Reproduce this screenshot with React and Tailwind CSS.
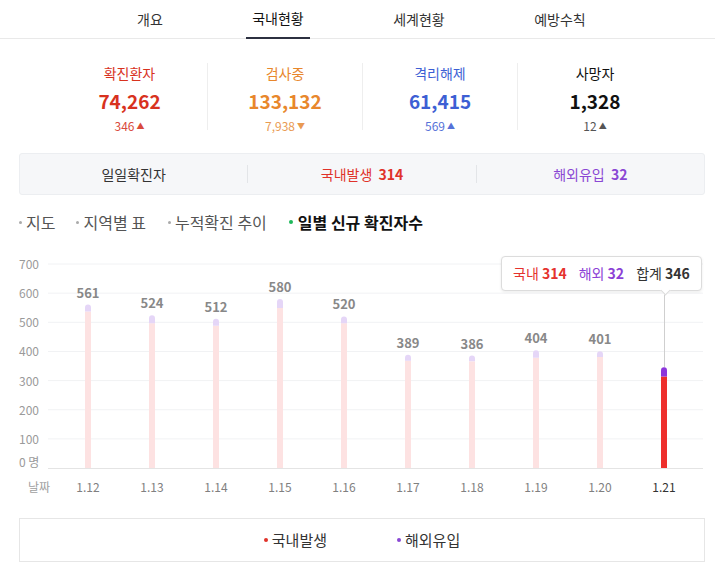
import React from "react";

const FONT = { fontFamily: '"Noto Sans CJK KR", "Noto Sans", sans-serif' };

const TABS = [
  { label: "개요", w: "w-[38px]" },
  { label: "국내현황", w: "w-[64px]", active: true },
  { label: "세계현황", w: "w-[64px]" },
  { label: "예방수칙", w: "w-[64px]" },
];

const DAYS = [
  { d: "1.12", dom: 537, ovs: 24 },
  { d: "1.13", dom: 497, ovs: 27 },
  { d: "1.14", dom: 488, ovs: 24 },
  { d: "1.15", dom: 549, ovs: 31 },
  { d: "1.16", dom: 497, ovs: 23 },
  { d: "1.17", dom: 368, ovs: 21 },
  { d: "1.18", dom: 366, ovs: 20 },
  { d: "1.19", dom: 378, ovs: 26 },
  { d: "1.20", dom: 381, ovs: 20 },
  { d: "1.21", dom: 314, ovs: 32 },
];

const BASE = 219;
const PER = 0.2914;

function Bar({ x, dom, ovs, active }) {
  const hDom = dom * PER;
  const hOvs = ovs * PER;
  const top = BASE - hDom - hOvs;
  const left = x - 3;
  return (
    <g>
      <rect x={left} y={BASE - hDom} width={6} height={hDom} fill={active ? "#ee2f2c" : "#fde2e2"} />
      <path
        d={`M${left} ${BASE - hDom} L${left} ${top + 3} Q${left} ${top} ${x} ${top} Q${left + 6} ${top} ${left + 6} ${top + 3} L${left + 6} ${BASE - hDom} Z`}
        fill={active ? "#8c36dc" : "#e5d6f7"}
      />
    </g>
  );
}

function Chart() {
  const grid = [700, 600, 500, 400, 300, 200, 100];
  return (
    <div className="relative mt-[17px] h-[250px]">
      <svg width="715" height="250" className="block">
        {grid.map((v) => (
          <g key={v}>
            <line x1="48" x2="703" y1={BASE - v * PER} y2={BASE - v * PER} stroke="#f1f2f4" />
            <text x="19" y={BASE - v * PER + 5} fontSize="12" fill="#9a9a9a" style={FONT}>{v}</text>
          </g>
        ))}
        <text x="19" y="218" fontSize="12" fill="#9a9a9a" style={FONT}>0 명</text>
        <line x1="48" x2="703" y1={BASE + 0.5} y2={BASE + 0.5} stroke="#e4e4e4" />
        <text x="39" y="243" fontSize="12" fill="#a0a0a0" textAnchor="middle" style={FONT}>날짜</text>
        {DAYS.map((day, i) => {
          const x = 88 + 64 * i;
          const last = i === DAYS.length - 1;
          const top = BASE - (day.dom + day.ovs) * PER;
          return (
            <g key={day.d}>
              {last && <line x1={x + 0.5} x2={x + 0.5} y1="42" y2={top} stroke="#cfcfcf" />}
              <Bar x={x} dom={day.dom} ovs={day.ovs} active={last} />
              {!last && (
                <text x={x} y={top - 7} fontSize="13" fontWeight="600" fill="#888" textAnchor="middle" style={FONT}>
                  {day.dom + day.ovs}
                </text>
              )}
              <text x={x} y="243" fontSize="12" fill={last ? "#333" : "#808080"} textAnchor="middle" style={FONT}>
                {day.d}
              </text>
            </g>
          );
        })}
      </svg>
      <div className="absolute left-[501px] top-[7px] flex h-[35px] w-[201px] items-center gap-[12px] rounded-[4px] border border-[#dcdcdc] bg-white pl-[11px] text-[14px] shadow-[0_1px_3px_rgba(0,0,0,0.08)]">
        <span className="text-[#e5322d]">국내 <b className="font-semibold">314</b></span>
        <span className="text-[#8c3fd6]">해외 <b className="font-semibold">32</b></span>
        <span className="text-[#333]">합계 <b className="font-semibold">346</b></span>
        <span className="absolute bottom-[-4px] left-[160px] h-[7px] w-[7px] rotate-45 border-b border-r border-[#dcdcdc] bg-white" />
      </div>
    </div>
  );
}

function Stat({ label, value, delta, up, color, subColor, divider }) {
  return (
    <div className={`flex h-[67px] w-[155px] flex-col items-center ${divider ? "border-l border-[#eeeeee]" : ""}`}>
      <div className={`h-[20px] text-[14px] leading-[20px] ${color}`}>{label}</div>
      <div className={`mt-[4px] h-[28px] text-[19px] font-bold leading-[28px] ${color}`}>{value}</div>
      <div className={`mt-[3px] flex h-[16px] items-center gap-[2px] text-[12px] leading-[16px] ${subColor}`}>
        {delta}
        <span className="text-[8px]">{up ? "▲" : "▼"}</span>
      </div>
    </div>
  );
}

export default function App() {
  return (
    <div className="h-[568px] w-[715px] overflow-hidden bg-white" style={FONT}>
      <div className="flex h-[39px] border-b border-[#e9e9e9] pl-[131px] gap-[77px]">
        {TABS.map((t) => (
          <div
            key={t.label}
            className={`${t.w} flex h-[39px] items-center justify-center whitespace-nowrap text-[14px] ${
              t.active ? "border-b-2 border-[#2c3040] text-[#111]" : "text-[#333]"
            }`}
          >
            {t.label}
          </div>
        ))}
      </div>

      <div className="mt-[24px] flex pl-[52px]">
        <Stat label="확진환자" value="74,262" delta="346" up color="text-[#d8321e]" subColor="text-[#d94a3c]" />
        <Stat label="검사중" value="133,132" delta="7,938" color="text-[#e8872c]" subColor="text-[#e99a52]" divider />
        <Stat label="격리해제" value="61,415" delta="569" up color="text-[#3d5fd4]" subColor="text-[#5672d8]" divider />
        <Stat label="사망자" value="1,328" delta="12" up color="text-[#111]" subColor="text-[#555]" divider />
      </div>

      <div className="ml-[19px] mr-[10px] mt-[23px] grid h-[42px] grid-cols-[1fr_1px_1fr_1px_1fr] items-center rounded-[3px] border border-[#eceef1] bg-[#f6f7f9] text-[14px]">
        <div className="text-center text-[#333]">일일확진자</div>
        <div className="h-[18px] bg-[#e3e5e8]" />
        <div className="text-center text-[#e0322a]">
          국내발생 <span className="ml-[3px] font-semibold">314</span>
        </div>
        <div className="h-[18px] bg-[#e3e5e8]" />
        <div className="text-center text-[#8a47d4]">
          해외유입 <span className="ml-[3px] font-semibold">32</span>
        </div>
      </div>

      <div className="mt-[17px] flex h-[20px] items-center pl-[19px] text-[16px] leading-[20px]">
        <span className="flex items-center text-[#555]">
          <span className="mr-[4px] h-[3px] w-[3px] rounded-full bg-[#aaa]" />지도
        </span>
        <span className="ml-[21px] flex items-center text-[#555]">
          <span className="mr-[4px] h-[3px] w-[3px] rounded-full bg-[#aaa]" />지역별 표
        </span>
        <span className="ml-[22px] flex items-center text-[#555]">
          <span className="mr-[4px] h-[3px] w-[3px] rounded-full bg-[#aaa]" />누적확진 추이
        </span>
        <span className="ml-[22px] flex items-center font-bold text-[#111]">
          <span className="mr-[5px] h-[4px] w-[4px] rounded-full bg-[#1eb85a]" />일별 신규 확진자수
        </span>
      </div>

      <Chart />

      <div className="ml-[19px] mr-[10px] mt-[19px] flex h-[44px] items-center justify-center gap-[70px] border border-[#e6e6e6] text-[15px] text-[#333]">
        <span className="flex items-center">
          <span className="mr-[4px] h-[4px] w-[4px] rounded-full bg-[#e0322a]" />국내발생
        </span>
        <span className="flex items-center">
          <span className="mr-[4px] h-[4px] w-[4px] rounded-full bg-[#8a47d4]" />해외유입
        </span>
      </div>
    </div>
  );
}
